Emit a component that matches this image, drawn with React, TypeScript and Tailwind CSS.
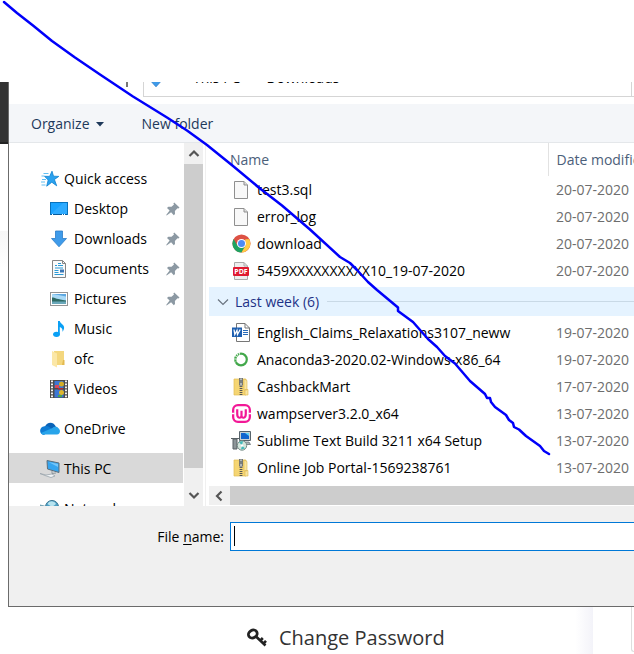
import type { ReactNode } from "react";

const svg = (children: ReactNode, size = 18, box = "0 0 18 18") => (
  <svg width={size} height={size} viewBox={box} fill="none" aria-hidden="true" className="shrink-0">
    {children}
  </svg>
);

const StarIcon = () =>
  svg(
    <>
      <path d="M11 1.2l1.5 5 5.3.2-4.4 3.1 2.3 6.3-4.9-3.6-5.1 4 1.5-6.2-3.7-3.7 5.1.1z" fill="#2ba2ef" stroke="#0d80cf" strokeWidth=".8" />
      <path d="M2.5 3.5h5M.5 6h3M1 9.5h4M0 12h4M.5 15h4" stroke="#62bff2" strokeWidth="1" />
    </>,
  );

const DesktopIcon = () =>
  svg(
    <>
      <rect x=".5" y="2.5" width="17" height="12" fill="#1aa3ff" stroke="#0872bd" />
      <path d="M1 14L13 3h4v11z" fill="#43b4ff" opacity=".5" />
      <path d="M1 14.5h16" stroke="#075b9b" />
      <path d="M2 14.5h1M12 14.5h1M14 14.5h1" stroke="#fff" />
    </>,
  );

const DownArrowIcon = () =>
  svg(<path d="M5.5 1h7v7.5h4L9 16.8 1.5 8.500h4z" fill="#3f9bea" stroke="#2c7cc8" strokeWidth=".8" />);

const DocumentIcon = () =>
  svg(
    <>
      <path d="M2.500.5h10l3 3v14h-13z" fill="#fafafa" stroke="#858585" />
      <path d="M12.500.5v3h3" stroke="#858585" />
      <path d="M5 5.500h2M8 3.500h3M8 5.500h5M5 8h8M4.500 10.500h4M4.500 12.500h4M4.500 14.500h9" stroke="#2b9ad6" />
      <path d="M10 9.500h4v3h-4z" fill="#3b76b5" />
    </>,
  );

const PictureIcon = () =>
  svg(
    <>
      <rect x=".5" y="2.500" width="17" height="13" fill="#fff" stroke="#949494" />
      <path d="M2 4h14v10H2z" fill="#a9d9f6" />
      <path d="M2 4h14v2.500L8 5z" fill="#5ba6e0" />
      <path d="M2 7.500c3 0 5 2 14 3V12H2z" fill="#2e6a64" />
      <path d="M2 11.500h14V14H2z" fill="#6aa8ba" />
    </>,
  );

const MusicIcon = () =>
  svg(
    <>
      <ellipse cx="6.500" cy="14.300" rx="3.400" ry="2.600" fill="#0aa0f5" />
      <path d="M8 1h1.800c.4 2.700 4.600 3.300 4.300 7.100-.1 1.600-.8 2.700-1.700 3.700.5-2.700-.5-4.300-2.600-4.900v7.600H8z" fill="#0aa0f5" />
    </>,
  );

const FolderIcon = () =>
  svg(
    <>
      <path d="M4 1h10v14H4z" fill="#f4d77e" />
      <path d="M2 1l5 2.500v14L2 15z" fill="#fbe7a7" />
      <path d="M13 10h1.500v5H12z" fill="#e3ba50" />
    </>,
  );

const VideoIcon = () =>
  svg(
    <>
      <path d="M0 0h18v18.500H0z" fill="#4b4b4b" />
      <path d="M2 .5v17M16 .5v17" stroke="#f2f2f2" strokeWidth="2" strokeDasharray="1.700 1.300" />
      <path d="M4.500 1h9v7h-9zM4.500 9.500h9v8h-9z" fill="#3c77d5" />
      <circle cx="11.500" cy="4" r="2.500" fill="#d3ad24" />
      <circle cx="11.500" cy="12.500" r="2.500" fill="#dfb62c" />
      <path d="M5 5h4v3H5z" fill="#d9475b" />
      <path d="M8 8h5v1.500H8z" fill="#b92b25" />
      <path d="M8 15h4v2H8z" fill="#48a54e" />
    </>,
  );

const CloudIcon = () =>
  svg(
    <>
      <path d="M5 6.500C7 1.500 14 1.300 16 7l-5 5-7-4z" fill="#0a63b8" />
      <path d="M4.500 6.200C7 5.300 9 6.500 12 9l-8 6C-1.500 14.500-1 6.500 4.500 6.200z" fill="#0f7cd4" />
      <path d="M12.500 8c2-2 5.500-1 5.500 0 3 1.500 2.500 6.500-1 6.500H4c-1.500 0-2.500-.7-3-1.600z" fill="#28a4ea" />
    </>,
    20,
    "0 0 20 18",
  );

const ComputerIcon = () =>
  svg(
    <>
      <path d="M7 1.500L19 4v9.500L7.500 10z" fill="#35a5ef" stroke="#5c6e7b" />
      <path d="M8.500 3l9.500 2v3z" fill="#74c6fa" />
      <path d="M0 14.500l6 1.500 6-1 3 2-4 1.500-6-2z" fill="#f1f4f6" stroke="#9aa5ac" strokeWidth=".8" />
      <path d="M12 12v2.500l4-.5" stroke="#8c979e" />
    </>,
    20,
    "0 0 20 20",
  );

const NetworkIcon = () =>
  svg(
    <>
      <circle cx="12" cy="7" r="6.500" fill="#4c9fc4" stroke="#36718e" />
      <path d="M7.500 4c2-4 7-3 8.500 0l-4 3z" fill="#b7e3ef" />
      <path d="M0 5l8 2v8l-8-2z" fill="#2f96bd" stroke="#7aa4b3" />
    </>,
    20,
    "0 0 20 18",
  );

const PinIcon = () =>
  svg(
    <path d="M8.200.5l5.300 5-1 1-1-.3-2.600 2.700.1 3.100-1.200 1.200-2.700-2.900L.6 13.500l-.4-.4 3.400-4.600L1 5.900l1.300-1.200 3.200.1 2.500-2.300-.6-1.100z" fill="#8c99a3" />,
    14,
    "0 0 14 14",
  );

const BlankFileIcon = () =>
  svg(
    <>
      <path d="M2.500.5H12l3.500 3.500v13.500h-13z" fill="#f8f8f8" stroke="#8f8f8f" />
      <path d="M12 .5V4h3.500" fill="#ddd" stroke="#8f8f8f" />
    </>,
  );

const ChromeIcon = () =>
  svg(
    <>
      <circle cx="10" cy="10" r="9.500" fill="#dd5144" />
      <path d="M1.800 5.200A9.500 9.500 0 0010 19.500l4.200-7.200-8.400 0z" fill="#1da362" />
      <path d="M18.200 5.500A9.500 9.500 0 0110 19.500l4.200-7.200L14 5.500z" fill="#ffcd46" />
      <circle cx="10" cy="10" r="4.800" fill="#fff" />
      <circle cx="10" cy="10" r="3.700" fill="#4c8bf5" />
    </>,
    19,
    "0 0 20 20",
  );

const PdfIcon = () =>
  svg(
    <>
      <path d="M2.500.5H12l3.500 3.500v13.500h-13z" fill="#eee" stroke="#aaa" />
      <path d="M12 .5V4h3.500" stroke="#aaa" />
      <rect x="1" y="5" width="16" height="9" rx="1" fill="#df1930" />
      <text x="9" y="12.200" textAnchor="middle" fill="#fff" fontSize="7" fontWeight="700" fontFamily="Open Sans, sans-serif">
        PDF
      </text>
    </>,
  );

const WordIcon = () =>
  svg(
    <>
      <path d="M4.500.5H13L17.500 5v13.500h-13z" fill="#fff" stroke="#777" />
      <path d="M13 .5V5h4.500" stroke="#777" />
      <path d="M11 7.500h5M11 9.500h5M11 11.500h5" stroke="#2a6bb8" />
      <rect y="4.500" width="10" height="9.500" fill="#1e5fb0" />
      <path d="M2 6.500l.8 5 2.200-4.200.5 4.200 2.700-5" stroke="#fff" strokeWidth="1.300" />
    </>,
    19,
    "0 0 19 19",
  );

const AnacondaIcon = () =>
  svg(
    <>
      <circle cx="9" cy="8.500" r="5.800" stroke="#43a84b" strokeWidth="2.200" />
      <path d="M3.500 5.500A6.300 6.300 0 018 2.300" stroke="#fff" strokeWidth="2.500" strokeDasharray="1 1.200" />
      <path d="M3 11.500l1-1M2.300 8h1.500" stroke="#fff" />
    </>,
  );

const ZipIcon = () =>
  svg(
    <>
      <path d="M2 1h12v16H2z" fill="#f5d573" stroke="#e2bd51" strokeWidth=".7" />
      <path d="M12 1l3 1.500V12H12zM13 11.500h3V17h-3z" fill="#fae5a0" stroke="#dfb84e" strokeWidth=".6" />
      <path d="M9 0v17" stroke="#555" strokeWidth="2.800" strokeDasharray="1 1" />
      <path d="M7.500 0h3v7l-1.500 1.500L7.500 7z" fill="#b2b7b8" stroke="#636768" strokeWidth=".8" />
      <path d="M9 2v3" stroke="#434748" />
    </>,
  );

const WampIcon = () =>
  svg(
    <>
      <rect x="1.200" y="1.200" width="17.600" height="17.600" rx="5" stroke="#f21897" strokeWidth="2.400" />
      <path d="M5.500 5.500v5c0 5 4.500 5 4.500 1.500V7v5c0 3.500 4.500 3.500 4.500-1.500v-5" stroke="#f21897" strokeWidth="2.300" />
      <path d="M0 10h2.800M17.200 10H20" stroke="#fff" strokeWidth="1.400" />
    </>,
    19,
    "0 0 20 20",
  );

const SetupIcon = () =>
  svg(
    <>
      <path d="M8.500.5h11v9h-11z" fill="#c9d1d5" stroke="#56636b" />
      <path d="M10 2h8v6h-8z" fill="#1265ce" />
      <path d="M14 2h4v3z" fill="#59d4fa" />
      <path d="M12 11h6l1.500 2.500H12z" fill="#abb4b8" stroke="#59656a" strokeWidth=".7" />
      <path d="M0 7.500h8M2 8h4v10H2z" fill="#8d9598" stroke="#596165" />
      <circle cx="11" cy="14.500" r="4.700" fill="#d4e5dc" stroke="#768c87" />
      <path d="M11 14.500l-3-3.500 4-1zM11 14.500l3 3-4 1z" fill="#41b9b9" />
      <circle cx="11" cy="14.500" r="1.200" fill="#fff" />
    </>,
    20,
    "0 0 20 20",
  );

const Chevron = ({ dir }: { dir: "up" | "down" | "left" }) => {
  const paths = { up: "M1.500 8L6 3.500 10.500 8", down: "M1.500 3L6 7.500 10.500 3", left: "M7.500 1.500L3 6l4.500 4.500" };
  return svg(<path d={paths[dir]} stroke="#555" strokeWidth="2.200" />, 12, "0 0 12 12");
};

const pinned = [
  { name: "Desktop", Icon: DesktopIcon, pin: true },
  { name: "Downloads", Icon: DownArrowIcon, pin: true },
  { name: "Documents", Icon: DocumentIcon, pin: true },
  { name: "Pictures", Icon: PictureIcon, pin: true },
  { name: "Music", Icon: MusicIcon, pin: false },
  { name: "ofc", Icon: FolderIcon, pin: false },
  { name: "Videos", Icon: VideoIcon, pin: false },
];

const yesterday = [
  { name: "test3.sql", Icon: BlankFileIcon, date: "20-07-2020" },
  { name: "error_log", Icon: BlankFileIcon, date: "20-07-2020" },
  { name: "download", Icon: ChromeIcon, date: "20-07-2020" },
  { name: "5459XXXXXXXXXX10_19-07-2020", Icon: PdfIcon, date: "20-07-2020" },
];

const lastWeek = [
  { name: "English_Claims_Relaxations3107_neww", Icon: WordIcon, date: "19-07-2020" },
  { name: "Anaconda3-2020.02-Windows-x86_64", Icon: AnacondaIcon, date: "19-07-2020" },
  { name: "CashbackMart", Icon: ZipIcon, date: "17-07-2020" },
  { name: "wampserver3.2.0_x64", Icon: WampIcon, date: "13-07-2020" },
  { name: "Sublime Text Build 3211 x64 Setup", Icon: SetupIcon, date: "13-07-2020" },
  { name: "Online Job Portal-1569238761", Icon: ZipIcon, date: "13-07-2020" },
];

type FileEntry = { name: string; Icon: () => ReactNode; date: string };

const FileRow = ({ name, Icon, date }: FileEntry) => (
  <tr className="h-[27px]">
    <td className="p-0 pl-[22px]">
      <div className="flex items-center gap-[6px]">
        <span className="flex w-5 justify-center">
          <Icon />
        </span>
        {name}
      </div>
    </td>
    <td className="p-0 pl-2 text-[#6d6d6d]">{date}</td>
  </tr>
);

const RootItem = ({ name, Icon, selected = false }: { name: string; Icon: () => ReactNode; selected?: boolean }) => (
  <button
    type="button"
    className={`flex h-[30px] w-full shrink-0 items-center gap-1 pt-[2px] pl-[30px] text-left ${selected ? "bg-[#d9d9d9]" : ""}`}
  >
    <span className="flex w-[21px] justify-center">
      <Icon />
    </span>
    {name}
  </button>
);

const Sidebar = () => (
  <nav className="flex h-full w-[174px] shrink-0 flex-col gap-[10px] overflow-hidden pt-5">
    <div>
      <RootItem name="Quick access" Icon={StarIcon} />
      {pinned.map(({ name, Icon, pin }) => (
        <button key={name} type="button" className="flex h-[30px] w-full items-center pt-[2px] pr-[3px] pl-[41px] text-left">
          <Icon />
          <span className="grow pl-[6px]">{name}</span>
          {pin && <PinIcon />}
        </button>
      ))}
    </div>
    <RootItem name="OneDrive" Icon={CloudIcon} />
    <RootItem name="This PC" Icon={ComputerIcon} selected />
    <RootItem name="Network" Icon={NetworkIcon} />
  </nav>
);

const FileList = () => (
  <div className="flex min-w-0 grow flex-col justify-between overflow-hidden">
    <table className="w-full table-fixed border-collapse whitespace-nowrap">
      <colgroup>
        <col className="w-[339px]" />
        <col />
      </colgroup>
      <thead>
        <tr className="h-[33px] text-left text-[#4c607a]">
          <th className="border-r border-[#e2e2e2] p-0 pl-[21px] font-normal">Name</th>
          <th className="p-0 pl-2 font-normal">Date modified</th>
        </tr>
      </thead>
      <tbody>
        {yesterday.map((f) => (
          <FileRow key={f.name} {...f} />
        ))}
        <tr>
          <td colSpan={2} className="p-0 pt-[3px] pb-[3px]">
            <div className="flex h-[29px] items-center bg-[#e5f3ff] pl-2 text-[#1e3287]">
              <svg width="12" height="12" viewBox="0 0 12 12" fill="none" aria-hidden="true">
                <path d="M1 3.500L6 8.500l5-5" stroke="#6a7480" strokeWidth="1.200" />
              </svg>
              <span className="px-[6px]">Last week (6)</span>
              <span className="ml-[2px] h-px grow bg-[#c9d9e6]" />
            </div>
          </td>
        </tr>
        {lastWeek.map((f) => (
          <FileRow key={f.name} {...f} />
        ))}
      </tbody>
    </table>
    <div className="mb-px flex h-[19px] bg-[#cdcdcd]">
      <button type="button" aria-label="Scroll left" className="flex w-[21px] items-center justify-center bg-[#f0f0f0]">
        <Chevron dir="left" />
      </button>
    </div>
  </div>
);

const Dialog = () => (
  <section className="min-w-0 grow border-b border-l border-[#6b6b6b] bg-white text-sm leading-5 text-black">
    <div className="flex h-[22px] overflow-hidden pb-[7px]">
      <div className="flex w-[134px] shrink-0 justify-end pr-[15px]">
        <span className="h-[5px] w-[2px] bg-[#777]" />
      </div>
      <div className="flex grow items-end overflow-hidden border-b border-l border-[#d5d5d5] pb-2 pl-[3px]">
        <span className="flex w-[46px] shrink-0">
          <DownArrowIcon />
        </span>
        <span>This PC</span>
        <span className="w-[26px] shrink-0" />
        <span>Downloads</span>
      </div>
      <div className="w-[3px] shrink-0 border-b border-l border-[#d5d5d5]" />
    </div>
    <div className="flex h-[39px] items-center gap-[38px] border-b border-[#e4e7ea] bg-[#f4f6f9] pt-[2px] pl-[22px] text-[#1e395b]">
      <button type="button" className="flex items-center gap-[6px]">
        Organize
        <svg width="8" height="5" viewBox="0 0 8 5" aria-hidden="true">
          <path d="M0 0h8L4 4.500z" fill="#1e395b" />
        </svg>
      </button>
      <button type="button">New folder</button>
    </div>
    <div className="flex h-[363px]">
      <Sidebar />
      <div className="ml-px flex w-[19px] shrink-0 flex-col bg-[#cdcdcd]">
        <button type="button" aria-label="Scroll up" className="flex h-[21px] items-center justify-center bg-[#f0f0f0]">
          <Chevron dir="up" />
        </button>
        <span className="grow" />
        <button type="button" aria-label="Scroll down" className="flex h-[38px] items-end justify-center bg-[#f0f0f0] pb-1">
          <Chevron dir="down" />
        </button>
      </div>
      <div className="mr-[3px] ml-px w-[2px] shrink-0 border-r border-[#f0f0f0]" />
      <FileList />
    </div>
    <div className="flex h-[100px] items-start bg-[#f0f0f0] pt-4">
      <label htmlFor="file-name" className="w-[215px] shrink-0 pt-[5px] text-right">
        File <u className="underline-offset-2">n</u>ame:
      </label>
      <div className="relative ml-[6px] grow">
        <input
          id="file-name"
          type="text"
          className="block h-[29px] w-full border border-r-0 border-[#0078d7] bg-white px-1 outline-none"
        />
        <span className="absolute top-1 left-1 h-5 w-px bg-black" />
      </div>
    </div>
  </section>
);

const KeyIcon = () => (
  <svg width="20" height="20" viewBox="0 0 20 20" fill="none" aria-hidden="true" className="shrink-0">
    <ellipse cx="5.800" cy="6" rx="4.500" ry="3.800" transform="rotate(-30 5.800 6)" stroke="#222" strokeWidth="2.800" />
    <path d="M9 8.500l9.500 9M13 13l2.800-3M16 16l3-3.200" stroke="#222" strokeWidth="2.600" />
  </svg>
);

const PenStroke = () => (
  <svg
    width="634"
    height="654"
    viewBox="0 0 634 654"
    fill="none"
    aria-hidden="true"
    className="pointer-events-none absolute top-0 left-0"
  >
    <path
      d="M4 2L17 13 33 25.500 52 41 75 57.500 100 74.500 133 96.500 167 117.500 187 130.500 207 145 233 166 260 188.500 282 205.500 310 229.500 340 257 350 263 357 270 368 282 377 290 398 307.500V311L413 322 428 339 437 347 445 356 455 363.500 470 381 485 394 487 398H490L491 402 495 407 506 415 509 420 513 423 514 427 519 429.500 526 436 540 446 544 451 549 454"
      stroke="#0000fa"
      strokeWidth="2.500"
      strokeLinejoin="round"
      strokeLinecap="round"
    />
  </svg>
);

export default function App() {
  return (
    <main className="relative min-h-screen overflow-hidden bg-white font-['Open_Sans','Noto_Sans',sans-serif]">
      <header className="h-[82px]" />
      <div className="flex">
        <div className="flex w-2 shrink-0 flex-col">
          <div className="h-[62px] border-b-2 border-[#222] bg-[#333]" />
          <div className="h-[87px]" />
          <div className="grow bg-linear-to-b from-[#f7f7f7] to-white to-10%" />
        </div>
        <Dialog />
      </div>
      <div className="flex h-[47px]">
        <div className="flex grow items-center bg-linear-to-l from-[#f3f3f9] to-white to-3% pt-[14px] pl-[247px]">
          <a href="#change-password" className="flex items-center gap-3 text-xl text-[#333]">
            <KeyIcon />
            Change Password
          </a>
        </div>
        <div className="flex w-[41px] shrink-0 justify-end">
          <div className="h-[45px] w-[3px] rounded-bl border-b border-l border-[#dedede]" />
        </div>
      </div>
      <PenStroke />
    </main>
  );
}
